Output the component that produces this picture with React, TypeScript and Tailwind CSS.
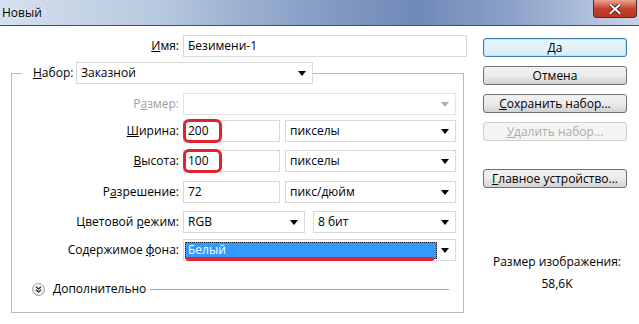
import React from "react";

const Arrow = ({ disabled = false }: { disabled?: boolean }) => (
  <svg width="8" height="5" viewBox="0 0 8 5" className="shrink-0">
    <polygon points="0,0 8,0 4,5" fill={disabled ? "#b0b0b0" : "#000"} />
  </svg>
);

const Label = ({ children, disabled = false }: { children: React.ReactNode; disabled?: boolean }) => (
  <div className={`w-[167px] shrink-0 text-right ${disabled ? "text-[#a0a0a0]" : "text-black"}`}>{children}</div>
);

const Input = ({ value, className = "" }: { value?: string; className?: string }) => (
  <div className={`h-[22px] border border-[#d9d9d9] bg-white flex items-center px-[4px] ${className}`}>{value}</div>
);

const Select = ({ value, className = "", disabled = false }: { value?: string; className?: string; disabled?: boolean }) => (
  <div className={`h-[22px] border ${disabled ? "border-[#e2e2e2]" : "border-[#d9d9d9]"} bg-white flex items-center pl-[4px] pr-[6px] ${className}`}>
    <span className="flex-1">{value}</span>
    <Arrow disabled={disabled} />
  </div>
);

const Btn = ({ children, primary = false, disabled = false, className = "" }: { children: React.ReactNode; primary?: boolean; disabled?: boolean; className?: string }) => (
  <div
    className={`h-[19px] w-[144px] rounded-[3px] border flex items-center justify-center leading-none ${
      disabled
        ? "border-[#cfcfcf] bg-[#f4f4f4] text-[#adadad]"
        : primary
        ? "border-[#3c7fb1] bg-gradient-to-b from-[#eaf6fd] to-[#d9eef9] shadow-[inset_0_0_0_1px_#b7e4fb]"
        : "border-[#707070] bg-gradient-to-b from-[#f2f2f2] via-[#ebebeb] to-[#d2d2d2]"
    } ${className}`}
  >
    {children}
  </div>
);

export default function App() {
  return (
    <div className="w-[639px] h-[324px] bg-white overflow-hidden text-[12px] text-black font-['Open_Sans',sans-serif]">
      {/* title bar */}
      <div className="h-[26px] flex items-start justify-between border-b border-[#3d4f6e] bg-[linear-gradient(90deg,#d5e0ee_0%,#b7c8df_25%,#8ea4c9_45%,#6f89b8_65%,#8ca2c8_80%,#c6d3e6_100%)]">
        <div className="pl-[2px] pt-[4px] text-[12px] [text-shadow:0_0_6px_#fff]">Новый</div>
        <div className="mr-[2px] w-[44px] h-[18px] rounded-b-[4px] border border-t-0 border-[#5a2a2a] bg-gradient-to-b from-[#e8a393] via-[#c7422c] to-[#b9341e] flex items-center justify-center">
          <svg width="12" height="10" viewBox="0 0 12 10">
            <path d="M1.5 1 L10.5 9 M10.5 1 L1.5 9" stroke="#3a1a1a" strokeWidth="3.6" strokeLinecap="square" />
            <path d="M1.5 1 L10.5 9 M10.5 1 L1.5 9" stroke="#fff" strokeWidth="2" strokeLinecap="square" />
          </svg>
        </div>
      </div>

      <div className="flex">
        {/* left */}
        <div className="w-[478px] pl-[11px]">
          <div className="flex items-center gap-[4px] pl-[1px] mt-[9px]">
            <Label>
              <span className="underline">И</span>мя:
            </Label>
            <Input value="Безимени-1" className="w-[284px]" />
          </div>

          <fieldset className="mt-[5px] w-[453px] h-[251px] border border-[#b9b9b9] p-0 m-0 min-w-0">
            <legend className="ml-[10px] pl-[11px]">
              <div className="flex items-center">
                <div className="w-[43px] shrink-0">
                  <span className="underline">Н</span>абор:
                </div>
                <Select value="Заказной" className="w-[237px]" />
              </div>
            </legend>

            <div className="flex flex-col">
              <div className="flex items-center gap-[4px] mt-[9px]">
                <Label disabled>
                  Р<span className="underline">а</span>змер:
                </Label>
                <Select disabled className="w-[273px]" />
              </div>

              <div className="flex items-center gap-[4px] mt-[5px] relative">
                <Label>
                  <span className="underline">Ш</span>ирина:
                </Label>
                <Input value="200" className="w-[97px]" />
                <Select value="пикселы" className="w-[171px] ml-[1px]" />
                <div className="absolute left-[171px] top-[-1px] w-[39px] h-[24px] border-[3px] border-[#e2212b] rounded-[6px]" />
              </div>

              <div className="flex items-center gap-[4px] mt-[8px] relative">
                <Label>
                  <span className="underline">В</span>ысота:
                </Label>
                <Input value="100" className="w-[97px]" />
                <Select value="пикселы" className="w-[171px] ml-[1px]" />
                <div className="absolute left-[171px] top-[-1px] w-[39px] h-[24px] border-[3px] border-[#e2212b] rounded-[6px]" />
              </div>

              <div className="flex items-center gap-[4px] mt-[9px]">
                <Label>
                  Р<span className="underline">а</span>зрешение:
                </Label>
                <Input value="72" className="w-[97px]" />
                <Select value="пикс/дюйм" className="w-[171px] ml-[1px]" />
              </div>

              <div className="flex items-center gap-[4px] mt-[8px]">
                <Label>
                  Цветовой <span className="underline">р</span>ежим:
                </Label>
                <Select value="RGB" className="w-[122px]" />
                <Select value="8 бит" className="w-[143px] ml-[4px]" />
              </div>

              <div className="flex items-center gap-[4px] mt-[6px]">
                <Label>
                  Содержимое <span className="underline">ф</span>она:
                </Label>
                <div className="h-[22px] w-[273px] border border-[#d9d9d9] bg-white flex items-center pl-[1px] pr-[6px]">
                  <div className="relative h-[17px] w-[252px] bg-[#3399ff] border border-dotted border-[#1b1b1b] text-white flex items-center pl-[2px]">
                    Белый
                    <div className="absolute left-0 bottom-[-3px] w-[248px] h-[4px] rounded-[2px] bg-[#e8232c]" />
                  </div>
                  <div className="flex-1" />
                  <Arrow />
                </div>
              </div>

              <div className="flex items-center mt-[19px] pl-[20px]">
                <svg width="13" height="13" viewBox="0 0 13 13" className="shrink-0">
                  <defs>
                    <linearGradient id="g" x1="0" y1="0" x2="0" y2="1">
                      <stop offset="0" stopColor="#ffffff" />
                      <stop offset="1" stopColor="#e4e4e4" />
                    </linearGradient>
                  </defs>
                  <circle cx="6.5" cy="6.5" r="6" fill="url(#g)" stroke="#9a9a9a" />
                  <path d="M4 3.8 L6.5 6 L9 3.8 M4 6.8 L6.5 9 L9 6.8" stroke="#222" strokeWidth="1.2" fill="none" />
                </svg>
                <span className="ml-[8px]">Дополнительно</span>
                <div className="ml-[4px] h-px w-[299px] bg-[#a5a5a5]" />
              </div>
            </div>
          </fieldset>
        </div>

        {/* right */}
        <div className="pl-[5px] pt-[12px] flex flex-col">
          <Btn primary>Да</Btn>
          <Btn className="mt-[9px]">Отмена</Btn>
          <Btn className="mt-[9px]">
            <span>
              <span className="underline">С</span>охранить набор...
            </span>
          </Btn>
          <Btn disabled className="mt-[9px]">
            <span>
              <span className="underline">У</span>далить набор...
            </span>
          </Btn>
          <Btn className="mt-[28px]">
            <span>
              <span className="underline">Г</span>лавное устройство...
            </span>
          </Btn>
          <div className="mt-[65px] text-center w-[148px]">Размер изображения:</div>
          <div className="mt-[4px] text-center w-[148px]">58,6K</div>
        </div>
      </div>
    </div>
  );
}
